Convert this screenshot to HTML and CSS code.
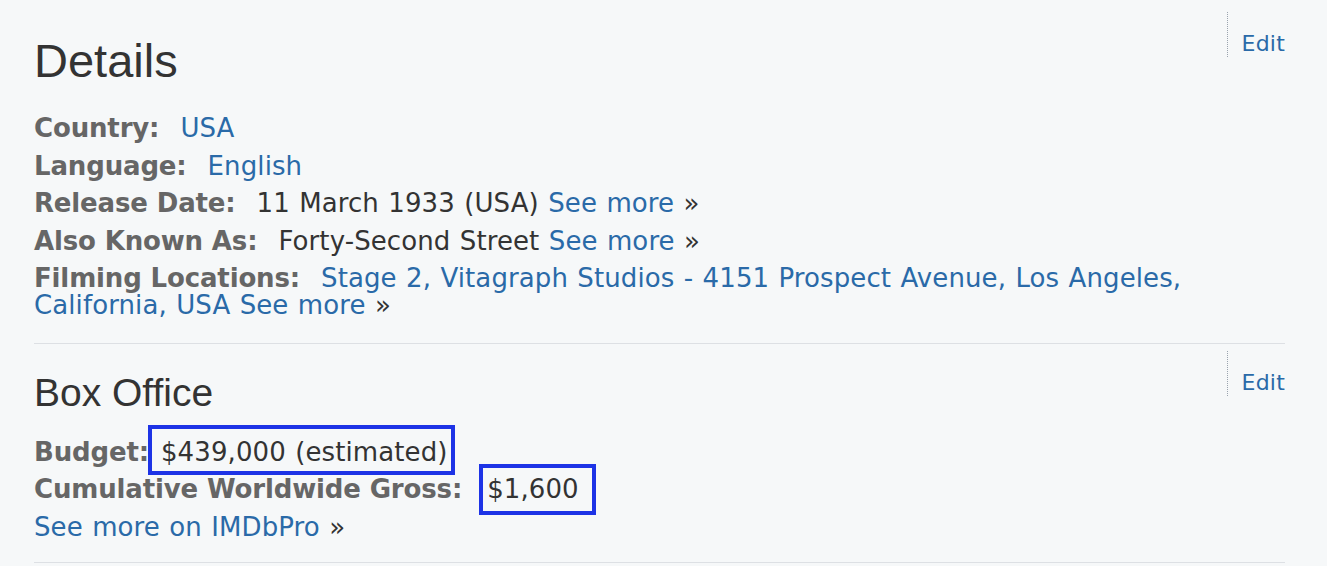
FILE: index.html
```html
<!DOCTYPE html>
<html lang="en">
<head>
<meta charset="utf-8">
<title>Details</title>
<link rel="stylesheet" href="styles.css">
</head>
<body>
<div class="page">
  <section class="block block-details">
    <div class="block-head">
      <h2 class="title-lg">Details</h2>
      <a class="edit" href="#">Edit</a>
    </div>
    <div class="row"><span class="label">Country:</span><a href="#">USA</a></div>
    <div class="row"><span class="label">Language:</span><a href="#">English</a></div>
    <div class="row"><span class="label">Release Date:</span>11 March 1933 (USA) <a href="#">See more</a>&nbsp;»</div>
    <div class="row"><span class="label">Also Known As:</span>Forty-Second Street <a href="#">See more</a>&nbsp;»</div>
    <div class="row"><span class="label">Filming Locations:</span><a href="#">Stage 2, Vitagraph Studios - 4151 Prospect Avenue, Los Angeles, California, USA</a> <a href="#">See more</a>&nbsp;»</div>
  </section>
  <section class="block block-box">
    <div class="block-head">
      <h3 class="title-md">Box Office</h3>
      <a class="edit" href="#">Edit</a>
    </div>
    <div class="row"><span class="label">Budget:</span><span class="hl hl-budget">$439,000 (estimated)</span></div>
    <div class="row"><span class="label">Cumulative Worldwide Gross:</span><span class="hl hl-gross">$1,600</span></div>
    <div class="row"><a href="#">See more on IMDbPro</a>&nbsp;»</div>
  </section>
</div>
</body>
</html>
```
FILE: styles.css
```css
html, body {
  margin: 0;
  padding: 0;
  background: #f6f8f9;
}
body {
  font-family: "DejaVu Sans", Verdana, sans-serif;
  font-size: 26px;
  color: #333;
}
a {
  color: #2a6aa8;
  text-decoration: none;
}
.page {
  width: 1251px;
  padding-left: 34px;
}
.block {
  border-bottom: 1px solid #dde0e4;
}
.block-details {
  padding-top: 12px;
  padding-bottom: 13px;
}
.block-box {
  padding-top: 7px;
  padding-bottom: 11px;
}
.block-head {
  display: flex;
  justify-content: space-between;
  align-items: flex-start;
}
.title-lg {
  margin: 22px 0 27px 0;
  font-family: "Liberation Sans", Arial, sans-serif;
  font-weight: normal;
  font-size: 47px;
  line-height: 54px;
  color: #333;
}
.title-md {
  margin: 20px 0 24px 0;
  font-family: "Liberation Sans", Arial, sans-serif;
  font-weight: normal;
  font-size: 39px;
  line-height: 44px;
  color: #333;
}
.edit {
  display: block;
  height: 22px;
  padding: 21px 0 2px 14px;
  border-left: 1px dotted #9aa3ae;
  font-size: 22px;
  line-height: 22px;
  letter-spacing: 0.2px;
}
.row {
  line-height: 27px;
  margin-bottom: 10.5px;
  word-spacing: 1px;
  letter-spacing: 0.1px;
}
.label {
  font-weight: bold;
  color: #666;
  margin-right: 21px;
  word-spacing: 0;
  letter-spacing: -0.15px;
}
.hl {
  border: 4px solid #1d33e6;
}
.hl-budget {
  margin-left: -22px;
  padding: 8px 3px 4px 9px;
}
.hl-gross {
  margin-left: -4px;
  padding: 6px 13px 7px 4px;
}
```
